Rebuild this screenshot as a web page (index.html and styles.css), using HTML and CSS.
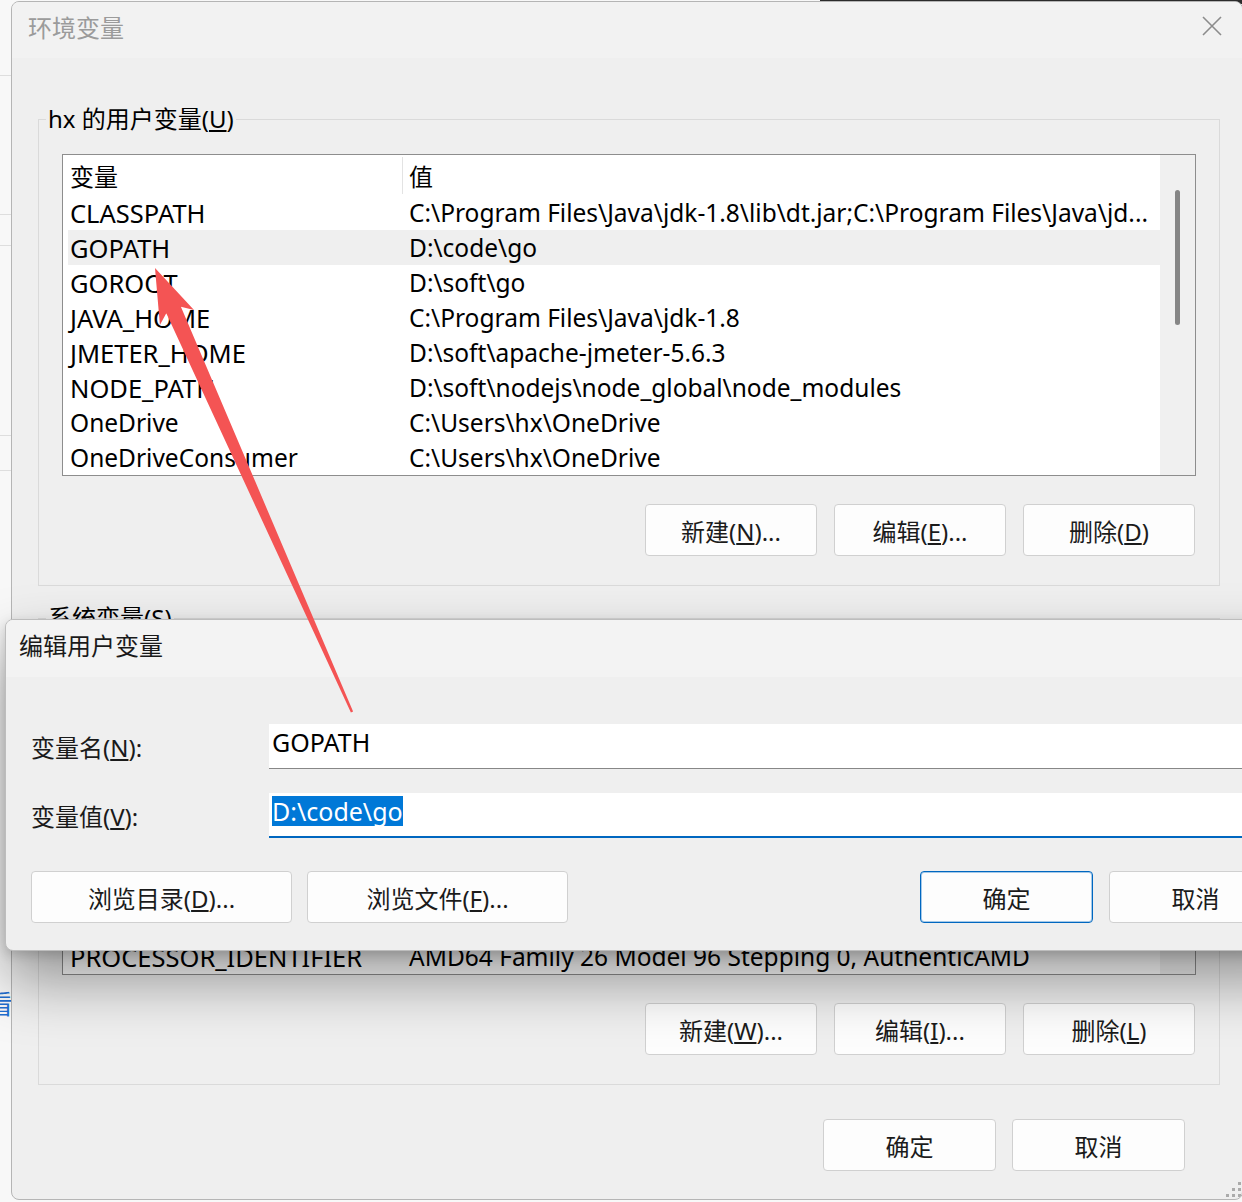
FILE: index.html
```html
<!DOCTYPE html>
<html lang="zh-CN">
<head>
    <meta charset="UTF-8">
    <title>环境变量</title>
    <link rel="stylesheet" href="styles.css">
</head>
<body>
<div class="desktop">
    <div class="top-strip"></div>
    <span class="bg-glyph">看</span>

    <!-- 环境变量 主窗口 -->
    <section class="window main-window">
        <header class="titlebar">
            <span class="title">环境变量</span>
            <svg class="close" width="20" height="20" viewBox="0 0 20 20">
                <path d="M1 1L19 19M19 1L1 19" stroke="#8c8c8c" stroke-width="1.6" fill="none"/>
            </svg>
        </header>

        <div class="window-body">
            <fieldset class="group">
                <legend>hx 的用户变量(<u>U</u>)</legend>
                <div class="list">
                    <div class="list-inner">
                        <div class="list-head">
                            <span class="cell-name">变量</span>
                            <span class="cell-value">值</span>
                        </div>
                        <div class="row"><span class="cell-name">CLASSPATH</span><span class="cell-value">C:\Program Files\Java\jdk-1.8\lib\dt.jar;C:\Program Files\Java\jd...</span></div>
                        <div class="row selected"><span class="cell-name">GOPATH</span><span class="cell-value">D:\code\go</span></div>
                        <div class="row"><span class="cell-name">GOROOT</span><span class="cell-value">D:\soft\go</span></div>
                        <div class="row"><span class="cell-name">JAVA_HOME</span><span class="cell-value">C:\Program Files\Java\jdk-1.8</span></div>
                        <div class="row"><span class="cell-name">JMETER_HOME</span><span class="cell-value">D:\soft\apache-jmeter-5.6.3</span></div>
                        <div class="row"><span class="cell-name">NODE_PATH</span><span class="cell-value">D:\soft\nodejs\node_global\node_modules</span></div>
                        <div class="row"><span class="cell-name mixed">OneDrive</span><span class="cell-value">C:\Users\hx\OneDrive</span></div>
                        <div class="row"><span class="cell-name mixed">OneDriveConsumer</span><span class="cell-value">C:\Users\hx\OneDrive</span></div>
                    </div>
                    <div class="scrollbar"><div class="thumb"></div></div>
                </div>
                <div class="btn-row">
                    <button class="btn">新建(<u>N</u>)...</button>
                    <button class="btn">编辑(<u>E</u>)...</button>
                    <button class="btn">删除(<u>D</u>)</button>
                </div>
            </fieldset>

            <fieldset class="group group-system">
                <legend>系统变量(<u>S</u>)</legend>
                <div class="list">
                    <div class="list-inner">
                        <div class="list-head">
                            <span class="cell-name">变量</span>
                            <span class="cell-value">值</span>
                        </div>
                        <div class="row"><span class="cell-name mixed">ComSpec</span><span class="cell-value">C:\Windows\system32\cmd.exe</span></div>
                        <div class="row"><span class="cell-name mixed">DriverData</span><span class="cell-value">C:\Windows\System32\Drivers\DriverData</span></div>
                        <div class="row"><span class="cell-name">NUMBER_OF_PROCESSORS</span><span class="cell-value">16</span></div>
                        <div class="row"><span class="cell-name">OS</span><span class="cell-value">Windows_NT</span></div>
                        <div class="row"><span class="cell-name mixed">Path</span><span class="cell-value">C:\Windows\system32;C:\Windows;C:\Windows\System32\Wbem</span></div>
                        <div class="row"><span class="cell-name">PATHEXT</span><span class="cell-value">.COM;.EXE;.BAT;.CMD;.VBS;.VBE;.JS;.JSE;.WSF;.WSH;.MSC</span></div>
                        <div class="row"><span class="cell-name">PROCESSOR_ARCHITECTURE</span><span class="cell-value">AMD64</span></div>
                        <div class="row"><span class="cell-name">PROCESSOR_IDENTIFIER</span><span class="cell-value">AMD64 Family 26 Model 96 Stepping 0, AuthenticAMD</span></div>
                    </div>
                    <div class="scrollbar"><div class="thumb"></div></div>
                </div>
                <div class="btn-row">
                    <button class="btn">新建(<u>W</u>)...</button>
                    <button class="btn">编辑(<u>I</u>)...</button>
                    <button class="btn">删除(<u>L</u>)</button>
                </div>
            </fieldset>

            <div class="btn-row window-actions">
                <button class="btn btn-wide">确定</button>
                <button class="btn btn-wide">取消</button>
            </div>
        </div>

        <svg class="grip" width="18" height="18" viewBox="0 0 18 18">
            <rect x="14" y="2" width="3" height="3" fill="#ababab"/>
            <rect x="8" y="8" width="3" height="3" fill="#ababab"/>
            <rect x="14" y="8" width="3" height="3" fill="#ababab"/>
            <rect x="2" y="14" width="3" height="3" fill="#ababab"/>
            <rect x="8" y="14" width="3" height="3" fill="#ababab"/>
            <rect x="14" y="14" width="3" height="3" fill="#ababab"/>
        </svg>
    </section>

    <!-- 编辑用户变量 对话框 -->
    <section class="window edit-dialog">
        <header class="titlebar">
            <span class="title">编辑用户变量</span>
        </header>
        <div class="form">
            <label class="form-label">变量名(<u>N</u>):</label>
            <div class="field">GOPATH</div>
            <label class="form-label">变量值(<u>V</u>):</label>
            <div class="field focused"><span class="sel">D:\code\go</span></div>
        </div>
        <div class="dialog-buttons">
            <button class="btn btn-browse">浏览目录(<u>D</u>)...</button>
            <button class="btn btn-browse">浏览文件(<u>F</u>)...</button>
            <span class="spacer"></span>
            <button class="btn btn-wide default">确定</button>
            <button class="btn btn-wide">取消</button>
        </div>
    </section>

    <!-- 标注箭头 -->
    <svg class="arrow" width="1242" height="1202" viewBox="0 0 1242 1202">
        <polygon fill="#f45454" points="155,268 194,310 180.9,306.8 353.1,711.5 350.9,712.5 166.3,313.2 159.9,324.9"/>
    </svg>
</div>
</body>
</html>
```

FILE: styles.css
```css
body {
    margin: 0;
    font-family: "Noto Sans", "Noto Sans CJK SC", sans-serif;
    color: #1a1a1a;
}

.desktop {
    position: relative;
    width: 1242px;
    height: 1202px;
    overflow: hidden;
    background-color: #f8f8f8;
    background-image:
        linear-gradient(#dedede, #dedede),
        linear-gradient(#dedede, #dedede),
        linear-gradient(#dedede, #dedede),
        linear-gradient(#dedede, #dedede),
        linear-gradient(#dedede, #dedede);
    background-size: 12px 1px;
    background-repeat: no-repeat;
    background-position: 0 75px, 0 214px, 0 245px, 0 435px, 0 470px;
}

.top-strip {
    position: absolute;
    top: 0;
    left: 820px;
    right: 0;
    height: 4px;
    background: #2b2b2b;
}

.bg-glyph {
    position: absolute;
    left: -13px;
    top: 984px;
    font-size: 26px;
    color: #1f6fd1;
}

.window {
    position: absolute;
    box-sizing: border-box;
    border-radius: 8px;
    overflow: hidden;
}

.titlebar {
    display: flex;
    align-items: center;
    justify-content: space-between;
    box-sizing: border-box;
    height: 56px;
    padding-bottom: 8px;
    font-size: 24px;
}

/* 主窗口 */
.main-window {
    left: 11px;
    top: 1px;
    width: 1232px;
    height: 1199px;
    border: 1px solid #b5b5b5;
    background: #efefef;
}

.main-window .titlebar {
    padding-left: 16px;
    padding-right: 20px;
    background: #f2f2f2;
}

.main-window .title {
    color: #9b9b9b;
}

.window-body {
    padding: 0 22px 0 26px;
}

.group {
    margin: 46px 0 0;
    padding: 20px 23px 29px;
    border: 1px solid #dadada;
    min-width: 0;
}

.group-system {
    margin-top: 17px;
}

.group legend {
    margin-left: -16px;
    padding: 0 2px;
    font-size: 24px;
    line-height: 30px;
    color: #000;
}

.list {
    display: flex;
    height: 322px;
    box-sizing: border-box;
    border: 1px solid #8d8d8d;
    background: #fff;
}

.list-inner {
    flex: 1;
    min-width: 0;
    padding-left: 5px;
    overflow: hidden;
    font-size: 24.5px;
    color: #000;
}

.list-head {
    display: flex;
    height: 40px;
    font-size: 24px;
}

.row {
    display: flex;
    align-items: center;
    height: 35px;
}

.row.selected {
    background: #efefef;
}

.cell-name {
    flex: none;
    width: 334px;
    padding-left: 2px;
    box-sizing: border-box;
    white-space: nowrap;
}

.row .cell-name {
    font-size: 25.5px;
}

.row .cell-name.mixed {
    font-size: 24.5px;
}

.cell-value {
    flex: 1;
    padding-left: 7px;
    white-space: nowrap;
    overflow: hidden;
}

.list-head .cell-name,
.list-head .cell-value {
    display: flex;
    align-items: center;
}

.list-head .cell-value {
    margin: 2px 0 1px;
    padding-left: 6px;
    border-left: 1px solid #e3e3e3;
}

.scrollbar {
    flex: none;
    width: 35px;
    padding-top: 35px;
    box-sizing: border-box;
    background: #f0f0f0;
}

.thumb {
    width: 5px;
    height: 135px;
    margin-left: 15px;
    border-radius: 3px;
    background: #868686;
}

.btn-row {
    display: flex;
    justify-content: flex-end;
    gap: 17px;
    margin-top: 28px;
    padding-right: 1px;
}

.btn {
    width: 172px;
    height: 52px;
    box-sizing: border-box;
    border: 1px solid #d0d0d0;
    border-radius: 4px;
    background: #fdfdfd;
    font-family: inherit;
    font-size: 24px;
    color: #1b1b1b;
    padding: 0;
}

.btn-wide {
    width: 173px;
}

.window-actions {
    gap: 16px;
    margin-top: 34px;
    padding-right: 35px;
}

.grip {
    position: absolute;
    right: 0;
    bottom: 1px;
}

/* 编辑用户变量 */
.edit-dialog {
    left: 5px;
    top: 619px;
    width: 1303px;
    border: 1px solid #bdbdbd;
    background: #efefef;
    box-shadow: 0 30px 60px rgba(0, 0, 0, 0.38), 0 4px 12px rgba(0, 0, 0, 0.16);
}

.edit-dialog .titlebar {
    height: 57px;
    padding-left: 13px;
    background: #f3f3f3;
}

.form {
    display: grid;
    grid-template-columns: 238px 1fr;
    row-gap: 24px;
    align-items: center;
    padding: 47px 25px 0;
}

.form-label {
    font-size: 24px;
}

.field {
    height: 45px;
    box-sizing: border-box;
    padding: 3px 3px 0;
    background: #fff;
    border-bottom: 1px solid #878787;
    font-size: 25px;
    line-height: 30px;
    color: #000;
}

.field.focused {
    border-bottom: 2px solid #0067c0;
}

.sel {
    display: inline-block;
    background: #0078d7;
    color: #fff;
}

.dialog-buttons {
    display: flex;
    gap: 15px;
    padding: 33px 25px 27px;
}

.dialog-buttons .spacer {
    flex: 1;
}

.dialog-buttons .btn-wide + .btn-wide {
    margin-left: 1px;
}

.btn-browse {
    width: 261px;
}

.btn.default {
    border: 1px solid #0067c0;
    box-shadow: inset 0 0 0 1px rgba(0, 103, 192, 0.35);
}

.arrow {
    position: absolute;
    left: 0;
    top: 0;
    pointer-events: none;
}
```
